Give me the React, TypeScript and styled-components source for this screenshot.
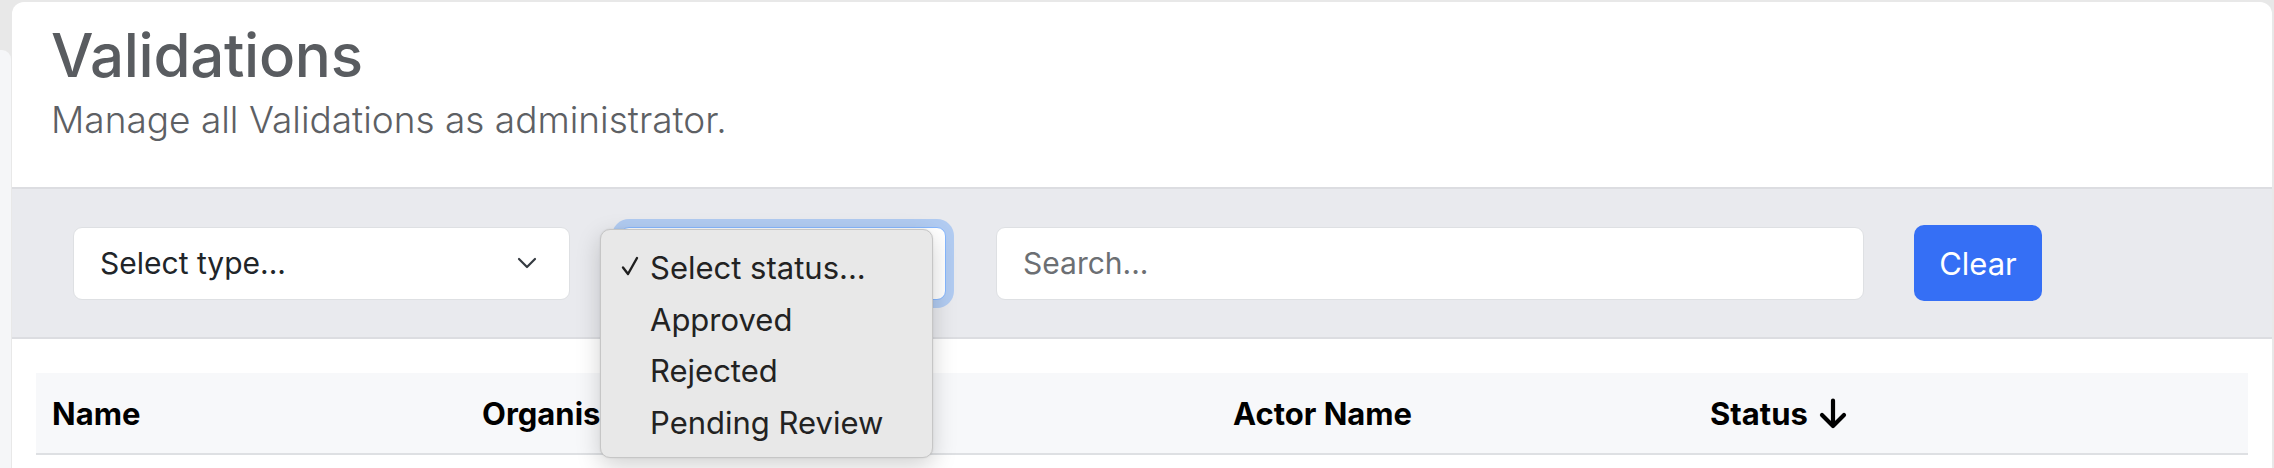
import React from 'react';
import styled, { createGlobalStyle } from 'styled-components';

const GlobalStyle = createGlobalStyle`
    * {
        box-sizing: border-box;
    }
    html,
    body {
        margin: 0;
        padding: 0;
    }
    body {
        background: #e8e8e8;
        font-family: Inter, 'Noto Sans', 'Liberation Sans', sans-serif;
        overflow: hidden;
    }
`;

const statusOptions = ['Select status...', 'Approved', 'Rejected', 'Pending Review'];

const columns = [
    { label: 'Name', sorted: false },
    { label: 'Organisation', sorted: false },
    { label: 'Actor Name', sorted: false },
    { label: 'Status', sorted: true },
];

const Chevron: React.FC = () => (
    <svg width="20" height="12" viewBox="0 0 20 12" fill="none">
        <polyline
            points="2,2 10,10 18,2"
            stroke="#343a40"
            strokeWidth="2.2"
            strokeLinecap="round"
            strokeLinejoin="round"
        />
    </svg>
);

const Check: React.FC = () => (
    <svg width="18" height="20" viewBox="0 0 18 20" fill="none">
        <path
            d="M2 11.5 L7 18 L16 2"
            stroke="#1f1f1f"
            strokeWidth="2.4"
            strokeLinecap="round"
            strokeLinejoin="round"
        />
    </svg>
);

const SortArrow: React.FC = () => (
    <svg width="30" height="31" viewBox="0 0 30 31" fill="none">
        <path
            d="M15 2.5 V27.5 M4 17 L15 28 L26 17"
            stroke="#000"
            strokeWidth="4.2"
            strokeLinecap="round"
            strokeLinejoin="round"
        />
    </svg>
);

const App: React.FC = () => {
    return (
        <>
            <GlobalStyle />
            <Page>
                <SideRail />
                <Card>
                    <Header>
                        <Title>Validations</Title>
                        <Subtitle>Manage all Validations as administrator.</Subtitle>
                    </Header>
                    <FilterBar>
                        <SelectBox width={497}>
                            <SelectText>Select type...</SelectText>
                            <Chevron />
                        </SelectBox>
                        <SelectWrap>
                            <SelectBox width={326} focused>
                                <SelectText>Select status...</SelectText>
                                <Chevron />
                            </SelectBox>
                            <OptionMenu>
                                {statusOptions.map((option, i) => (
                                    <OptionItem key={option}>
                                        <CheckSlot>{i === 0 && <Check />}</CheckSlot>
                                        {option}
                                    </OptionItem>
                                ))}
                            </OptionMenu>
                        </SelectWrap>
                        <SearchBox>
                            <Placeholder>Search...</Placeholder>
                        </SearchBox>
                        <ClearButton>Clear</ClearButton>
                    </FilterBar>
                    <TableArea>
                        <HeadRow>
                            {columns.map((col) => (
                                <HeadCell key={col.label}>
                                    {col.label}
                                    {col.sorted && <SortArrow />}
                                </HeadCell>
                            ))}
                        </HeadRow>
                    </TableArea>
                </Card>
            </Page>
        </>
    );
};

export default App;

const Page = styled.div`
    display: flex;
    height: 100vh;
    padding-top: 2px;
    padding-right: 2px;
`;

const SideRail = styled.div`
    width: 11px;
    margin-top: 48px;
    margin-right: 1px;
    background: #f5f6f8;
    border-top-right-radius: 9px;
`;

const Card = styled.main`
    flex: 1;
    background: #ffffff;
    border-radius: 12px 12px 0 0;
    display: flex;
    flex-direction: column;
`;

const Header = styled.header`
    padding: 17px 39px 45px;
`;

const Title = styled.h1`
    margin: 0;
    font-size: 60px;
    line-height: 72px;
    font-weight: 500;
    color: #595c60;
    letter-spacing: -0.3px;
`;

const Subtitle = styled.p`
    margin: 7px 0 0;
    font-size: 37px;
    line-height: 44px;
    font-weight: 300;
    color: #5d6064;
`;

const FilterBar = styled.div`
    display: flex;
    align-items: center;
    gap: 50px;
    height: 152px;
    padding-left: 61px;
    background: #e9eaee;
    border-top: 2px solid #dcdde1;
    border-bottom: 2px solid #dcdde1;
`;

const SelectWrap = styled.div`
    position: relative;
`;

const SelectBox = styled.div<{ width: number; focused?: boolean }>`
    display: flex;
    align-items: center;
    justify-content: space-between;
    width: ${(p) => p.width}px;
    height: 73px;
    padding: 0 32px 0 26px;
    background: #ffffff;
    border: 1.5px solid ${(p) => (p.focused ? '#86b7fe' : '#dee0e3')};
    border-radius: 9px;
    box-shadow: ${(p) => (p.focused ? '0 0 0 8px rgba(13, 110, 253, 0.25)' : 'none')};
`;

const SelectText = styled.span`
    font-size: 30px;
    color: #212529;
`;

const OptionMenu = styled.ul`
    position: absolute;
    top: 2px;
    left: -20px;
    width: 333px;
    margin: 0;
    padding: 12px 0 8px;
    list-style: none;
    background: #e8e8e8;
    border: 1px solid #c6c6c6;
    border-radius: 10px;
    box-shadow: 0 8px 24px rgba(0, 0, 0, 0.18), 0 0 2px rgba(0, 0, 0, 0.1);
    z-index: 5;
`;

const OptionItem = styled.li`
    display: flex;
    align-items: center;
    height: 51.8px;
    padding-left: 20px;
    font-size: 31px;
    color: #222222;
`;

const CheckSlot = styled.span`
    display: flex;
    align-items: center;
    width: 29px;
    height: 100%;
    padding-bottom: 2px;
`;

const SearchBox = styled.div`
    display: flex;
    align-items: center;
    width: 868px;
    height: 73px;
    padding-left: 26px;
    background: #ffffff;
    border: 1.5px solid #dee0e3;
    border-radius: 9px;
`;

const Placeholder = styled.span`
    font-size: 30px;
    color: #6c6f73;
`;

const ClearButton = styled.button`
    width: 128px;
    height: 76px;
    border: none;
    border-radius: 10px;
    background: #356ff5;
    color: #ffffff;
    font-family: inherit;
    font-size: 31px;
    cursor: pointer;
`;

const TableArea = styled.section`
    padding: 34px 24px 0;
`;

const HeadRow = styled.div`
    display: grid;
    grid-template-columns: 430px 751px 477px 1fr;
    height: 82px;
    background: #f7f8fa;
    border-bottom: 2px solid #dee0e3;
`;

const HeadCell = styled.div`
    display: flex;
    align-items: center;
    gap: 10px;
    padding-left: 16px;
    font-size: 31px;
    font-weight: 700;
    color: #000000;
`;
